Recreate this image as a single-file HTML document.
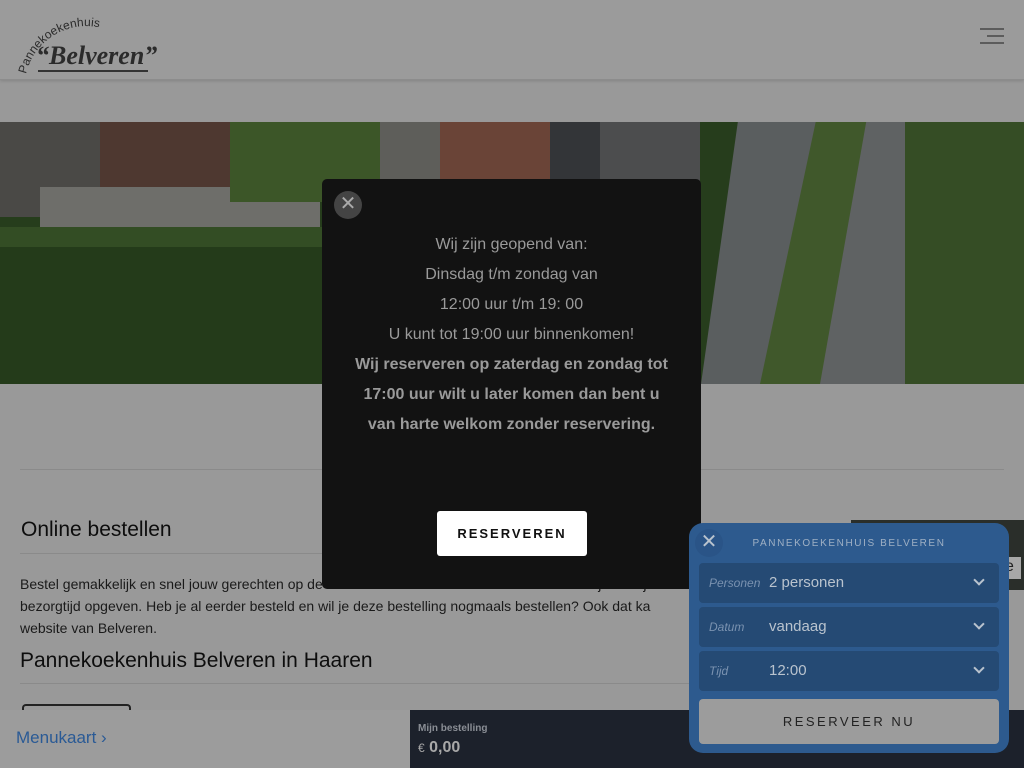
<!DOCTYPE html>
<html><head><meta charset="utf-8"><style>
*{margin:0;padding:0;box-sizing:border-box}
body{width:1024px;height:768px;overflow:hidden;background:#999;font-family:"Liberation Sans",sans-serif;position:relative}
.abs{position:absolute}
.hdr{left:0;top:0;width:1024px;height:80px;background:#9b9b9b;border-bottom:1px solid #8c8c8c;box-shadow:0 1px 3px rgba(0,0,0,.15)}
.burger span{position:absolute;height:2px;background:#5c5c5c}
.hero{left:0;top:122px;width:1024px;height:262px;overflow:hidden;background:#263d1c}
.hero div{position:absolute}
.txt{color:#1a1a1a;font-size:14px;line-height:22px}
h2{font-weight:normal;font-size:21px;color:#0d0d0d}
.modal{left:322px;top:179px;width:379px;height:410px;background:#121212;border-radius:5px;color:#9a9a9a;text-align:center;font-size:16px}
.modal p{line-height:30px}
.w{left:689px;top:523px;width:320px;height:230px;background:#2d5a8e;border-radius:14px}
.row{position:absolute;left:10px;width:300px;height:40px;background:#254a74;border-radius:4px}
.row i{position:absolute;left:10px;top:13px;font-size:12px;color:#7a92b0}
.row b{position:absolute;left:70px;top:11px;font-weight:normal;font-size:15px;color:#b9c3ce}
.chev{position:absolute;right:16px;top:13px;width:8px;height:8px;border-right:2px solid #b9c3ce;border-bottom:2px solid #b9c3ce;transform:rotate(45deg)}
</style></head><body>
<div class="abs hdr">
<svg class="abs" style="left:18px;top:14px" width="140" height="62"><path d="M8 60 A62 62 0 0 1 90 16" fill="none" id="arc"/><text font-size="12" fill="#2b2b2b" font-family="Liberation Sans" textLength="96" lengthAdjust="spacing"><textPath href="#arc">Pannekoekenhuis</textPath></text>
<text x="18" y="50" font-family="Liberation Serif" font-style="italic" font-weight="bold" font-size="26" fill="#2b2b2b">“Belveren”</text><rect x="20" y="56" width="110" height="2" fill="#333"/></svg>
<div class="abs burger" style="left:980px;top:28px;width:24px;height:18px"><span style="left:0;top:0;width:24px"></span><span style="left:7px;top:7px;width:17px"></span><span style="left:0;top:14px;width:24px"></span></div>
</div>
<div class="abs hero">
<div style="left:0;top:0;width:100px;height:95px;background:#4a4946"></div>
<div style="left:100px;top:0;width:140px;height:70px;background:#4e3830"></div>
<div style="left:40px;top:65px;width:280px;height:40px;background:#6e6e6a"></div>
<div style="left:230px;top:0;width:150px;height:80px;background:#3c5628"></div>
<div style="left:380px;top:0;width:60px;height:60px;background:#5e5e5a"></div>
<div style="left:440px;top:0;width:110px;height:60px;background:#6a4437"></div>
<div style="left:550px;top:0;width:50px;height:60px;background:#333538"></div>
<div style="left:600px;top:0;width:100px;height:60px;background:#4c4d4e"></div>
<div style="left:0;top:110px;width:330px;height:152px;background:#243b1a"></div>
<div style="left:0;top:105px;width:330px;height:20px;background:#334d24"></div>
<div style="left:701px;top:0;width:90px;height:262px;background:#5a5e5f;transform:skewX(-8deg);transform-origin:0 100%"></div>
<div style="left:760px;top:0;width:90px;height:262px;background:#40582b;transform:skewX(-12deg);transform-origin:0 100%"></div>
<div style="left:820px;top:0;width:100px;height:262px;background:#5f6263;transform:skewX(-10deg);transform-origin:0 100%"></div>
<div style="left:905px;top:0;width:119px;height:262px;background:#354d25"></div>
</div>
<div class="abs" style="left:20px;top:469px;width:984px;height:1px;background:#8a8a8a"></div>
<h2 class="abs" style="left:21px;top:518px">Online bestellen</h2>
<div class="abs" style="left:20px;top:553px;width:680px;height:1px;background:#8a8a8a"></div>
<div class="abs txt" style="left:20px;top:573px;width:680px">Bestel gemakkelijk en snel jouw gerechten op de website van Pannekoekenhuis Belveren en je kunt je<br>bezorgtijd opgeven. Heb je al eerder besteld en wil je deze bestelling nogmaals bestellen? Ook dat ka<br>website van Belveren.</div>
<h2 class="abs" style="left:20px;top:649px">Pannekoekenhuis Belveren in Haaren</h2>
<div class="abs" style="left:20px;top:683px;width:680px;height:1px;background:#8a8a8a"></div>
<div class="abs" style="left:22px;top:704px;width:109px;height:10px;border:2px solid #222;border-bottom:none;border-radius:4px 4px 0 0"></div>
<div class="abs" style="left:851px;top:520px;width:173px;height:70px;background:#2a2e2a"></div>
<div class="abs" style="left:1003px;top:557px;width:18px;height:22px;background:#a8a8a8;font-size:16px;color:#222;padding:1px 2px">e</div>
<div class="abs" style="left:0;top:710px;width:410px;height:58px;background:#9c9c9c"></div>
<div class="abs" style="left:16px;top:728px;font-size:17px;color:#2a5a95">Menukaart ›</div>
<div class="abs" style="left:410px;top:710px;width:614px;height:58px;background:#1c212b"></div>
<div class="abs" style="left:418px;top:723px;font-size:10px;color:#8a8e95;font-weight:bold">Mijn bestelling</div>
<div class="abs" style="left:418px;top:739px;font-size:16px;color:#a8a8a8;font-weight:bold"><span style="font-size:12px;font-weight:normal">€</span> 0,00</div>
<div class="abs modal">
<div class="abs" style="left:12px;top:12px;width:28px;height:28px;border-radius:50%;background:#444;color:#aaa;font-size:20px;line-height:27px">✕</div>
<div style="padding-top:51px"><p>Wij zijn geopend van:</p><p>Dinsdag t/m zondag van</p><p>12:00 uur t/m 19: 00</p><p>U kunt tot 19:00 uur binnenkomen!</p><p style="font-weight:bold">Wij reserveren op zaterdag en zondag tot<br>17:00 uur wilt u later komen dan bent u<br>van harte welkom zonder reservering.</p></div>
<div class="abs" style="left:115px;top:332px;width:150px;height:45px;background:#fff;border-radius:3px;color:#111;font-weight:bold;font-size:13px;letter-spacing:2px;line-height:45px">RESERVEREN</div>
</div>
<div class="abs w">
<div class="abs" style="left:6px;top:6px;width:28px;height:28px;border-radius:50%;background:#2a5487;color:#b9c3ce;font-size:20px;line-height:27px;text-align:center">✕</div>
<div class="abs" style="left:0;top:15px;width:320px;text-align:center;font-size:10px;letter-spacing:1.6px;color:#9fb0c4">PANNEKOEKENHUIS BELVEREN</div>
<div class="row" style="top:40px"><i>Personen</i><b>2 personen</b><span class="chev"></span></div>
<div class="row" style="top:84px"><i>Datum</i><b>vandaag</b><span class="chev"></span></div>
<div class="row" style="top:128px"><i>Tijd</i><b>12:00</b><span class="chev"></span></div>
<div class="row" style="top:176px;height:45px;background:#9c9c9c;text-align:center;line-height:45px;font-size:13px;letter-spacing:2.5px;color:#222">RESERVEER NU</div>
</div>
</body></html>
